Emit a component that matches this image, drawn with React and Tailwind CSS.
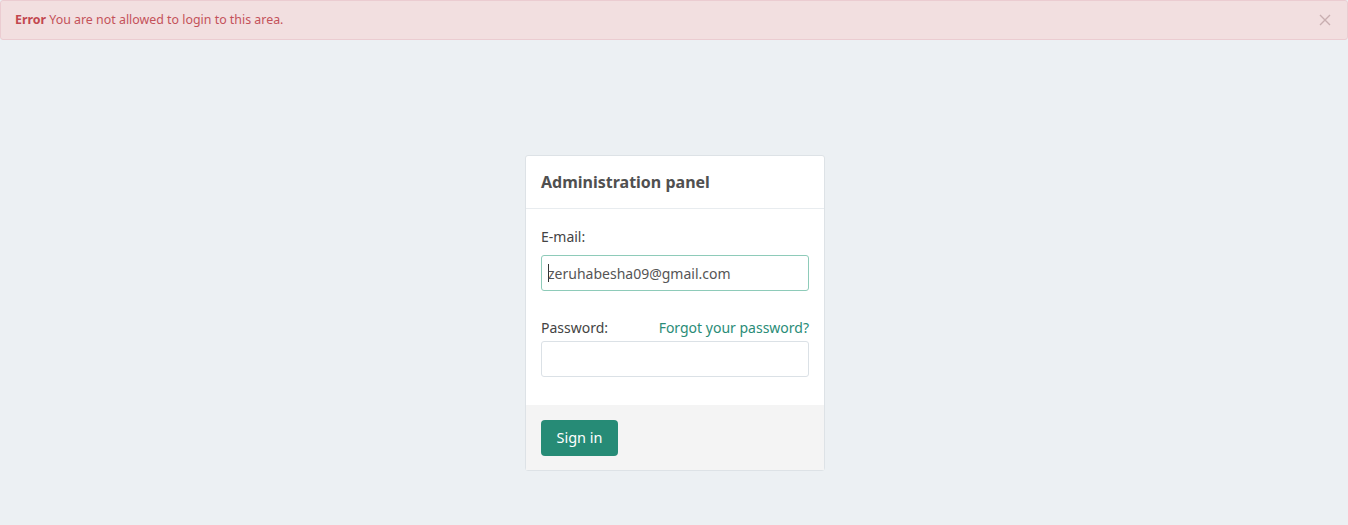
export default function App() {
  return (
    <div className="min-h-[525px] w-full bg-[#ecf0f3]" style={{ fontFamily: '"Noto Sans", "Open Sans", sans-serif' }}>
      <div className="flex h-[40px] items-center justify-between rounded-[3px] border border-[#ebccd1] bg-[#f2dfe0] pl-[14px] pr-[16px]">
        <div className="text-[12.4px] text-[#c4525a]">
          <span className="font-bold text-[#c2474f]">Error</span> You are not allowed to login to this area.
        </div>
        <svg width="12" height="12" viewBox="0 0 12 12" className="text-[#c8aeb0]">
          <path d="M1 1L11 11M11 1L1 11" stroke="currentColor" strokeWidth="1.4" />
        </svg>
      </div>
      <div className="flex justify-center pl-[2px] pt-[115px]">
        <div className="w-[300px] rounded-[3px] border border-[#dde2e6] bg-white">
          <div className="flex h-[53px] items-center border-b border-[#e8ecef] px-[15px]">
            <h1 className="text-[16px] font-bold text-[#505050]">Administration panel</h1>
          </div>
          <div className="px-[15px] pb-[28px] pt-[18px]">
            <label className="block text-[14px] leading-[20px] text-[#444]">E-mail:</label>
            <div className="mt-[8px] flex h-[36px] items-center rounded-[3px] border border-[#8ecbb9] px-[6px] text-[14px] text-[#555]">
              <span className="mr-[-1px] inline-block h-[18px] w-px bg-[#333]"></span>zeruhabesha09@gmail.com
            </div>
            <div className="mt-[27px] flex items-center justify-between">
              <label className="text-[14px] leading-[20px] text-[#444]">Password:</label>
              <a className="text-[14px] leading-[20px] text-[#2a8c77]">Forgot your password?</a>
            </div>
            <div className="mt-[3px] h-[36px] rounded-[3px] border border-[#dbe1e6]"></div>
          </div>
          <div className="bg-[#f4f4f4] px-[15px] pb-[14px] pt-[15px]">
            <button className="h-[36px] w-[77px] rounded-[4px] bg-[#268b76] text-[14.5px] text-white">Sign in</button>
          </div>
        </div>
      </div>
    </div>
  );
}
